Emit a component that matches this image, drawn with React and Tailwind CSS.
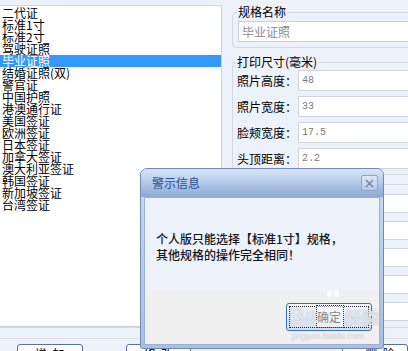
import React from "react";

const items = [
  "二代证",
  "标准1寸",
  "标准2寸",
  "驾驶证照",
  "毕业证照",
  "结婚证照(双)",
  "警官证",
  "中国护照",
  "港澳通行证",
  "美国签证",
  "欧洲签证",
  "日本签证",
  "加拿大签证",
  "澳大利亚签证",
  "韩国签证",
  "新加坡签证",
  "台湾签证",
];

const rows = [
  ["照片高度：", "48"],
  ["照片宽度：", "33"],
  ["脸颊宽度：", "17.5"],
  ["头顶距离：", "2.2"],
];

function Field({ label, value }) {
  return (
    <div className="flex items-center h-[21px]">
      <div className="w-[65px] pl-[4px] text-[12px] leading-[14px] text-black">{label}</div>
      <div className="w-[160px] h-[21px] border border-[#D0D5DD] bg-white pl-[3px] flex items-center text-[10px] font-['Liberation_Mono',monospace] text-[#7A7A7A]">
        {value}
      </div>
    </div>
  );
}

export default function App() {
  return (
    <div className="relative w-[408px] h-[351px] overflow-hidden bg-[#EDF1F9] font-['Noto_Sans_CJK_SC','Liberation_Sans',sans-serif] text-black">
      <div className="flex h-[327px] overflow-hidden">
        {/* list panel */}
        <div className="mt-[5px] w-[222px] h-[322px] shrink-0 bg-white border-t border-r border-b border-[#CDD3DD] pt-[1px]">
          {items.map((it, i) => (
            <div
              key={it}
              className={
                i === 4
                  ? "h-[12px] leading-[12px] text-[12px] pl-[2px] bg-[#3399FF] text-white whitespace-nowrap"
                  : "h-[12px] leading-[12px] text-[12px] pl-[2px] text-black whitespace-nowrap"
              }
            >
              {it}
            </div>
          ))}
        </div>
        {/* right panel */}
        <div className="pl-[10px] pt-[5px] flex flex-col shrink-0">
          <fieldset className="w-[200px] border border-[#D3D8E1] rounded-[4px] px-0 pb-[5px]">
            <legend className="ml-[4px] px-[1px] text-[12px] leading-[14px]">规格名称</legend>
            <div className="ml-[5px] mt-[2px] h-[21px] border border-[#C9CED7] bg-white pl-[3px] flex items-center text-[12px] text-[#8C8C8C]">
              毕业证照
            </div>
          </fieldset>
          <fieldset className="mt-[7px] w-[200px] border border-[#D3D8E1] rounded-[4px] px-0 pb-[5px]">
            <legend className="ml-[3px] px-[1px] text-[12px] leading-[14px]">打印尺寸(毫米)</legend>
            <div className="mt-[1px] flex flex-col gap-[5px]">
              {rows.map(([l, v]) => (
                <Field key={l} label={l} value={v} />
              ))}
            </div>
          </fieldset>
          <fieldset className="mt-[2px] w-[200px] border border-[#D3D8E1] rounded-[4px] px-0 pb-[5px]">
            <legend className="ml-[3px] px-[1px] text-[12px] leading-[14px]">&nbsp;</legend>
            <div className="mt-[3px] flex flex-col gap-[8px]">
              {[0, 1, 2, 3, 4, 5].map((k) => (
                <div key={k} className="ml-[70px] h-[19px] border border-[#D0D5DD] bg-white" />
              ))}
            </div>
          </fieldset>
        </div>
      </div>

      {/* bottom strip */}
      <div className="h-[24px] border-t border-[#D3D8E0]">
        <div className="mt-[10px] border-t border-[#DDE2EA] pt-[5px] flex">
          <div className="ml-[17px] w-[68px] h-[22px] border border-[#5572A3] rounded-[3px] bg-linear-to-b from-white to-[#E6ECF5] text-center text-[12px] leading-[18px]">
            增&nbsp;&nbsp;加
          </div>
          <div className="ml-[43px] w-[68px] h-[22px] border border-[#5572A3] rounded-[3px] bg-linear-to-b from-white to-[#E6ECF5] text-center text-[12px] leading-[18px]">
            修&nbsp;&nbsp;改
          </div>
          <div className="ml-[151px] w-[68px] h-[22px] border border-[#5572A3] rounded-[3px] bg-white text-center text-[12px] leading-[18px] pl-[10px]">
            删&nbsp;&nbsp;除
          </div>
        </div>
      </div>

      {/* dialog */}
      <div className="absolute left-[140px] top-[168px] w-[244px] h-[181px] rounded-t-[7px] rounded-b-[3px] border border-[#7189B3] bg-linear-to-b from-[#C9DBF3] to-[#A9BFE3] flex flex-col">
        <div className="h-[28px] shrink-0 flex items-center justify-between pl-[11px] pr-[5px] rounded-t-[6px] bg-linear-to-b from-[#D6E6F8] via-[#B3C9EA] to-[#8EA8D4]">
          <span className="text-[12px] leading-[14px] text-[#24508E]">警示信息</span>
          <div className="w-[17px] h-[16px] border border-[#8EA4C9] rounded-[2px] bg-linear-to-b from-[#DDE8F7] to-[#B4C8E6] flex items-center justify-center">
            <svg width="9" height="9" viewBox="0 0 9 9">
              <path d="M1 1 L8 8 M8 1 L1 8" stroke="#6F7F98" strokeWidth="1.2" />
            </svg>
          </div>
        </div>
        <div className="flex-1 mx-[3px] mb-[3px] border border-[#9DB1D4] flex flex-col">
          <div className="h-[93px] shrink-0 bg-[#EEF2FA] pl-[11px] pt-[33px] text-[12px] leading-[16px] font-medium text-[#14161E]">
            <div className="whitespace-nowrap">个人版只能选择【标准1寸】规格，</div>
            <div className="whitespace-nowrap">其他规格的操作完全相同！</div>
          </div>
          <div className="flex-1 bg-[#F0F0F0] flex justify-end items-start pt-[12px] pr-[7px]">
            <div className="relative w-[86px] h-[28px] border border-[#3E6DB5] rounded-[3px] bg-linear-to-b from-[#F4F7FD] to-[#D2DFF2] flex items-center justify-center text-[12px] text-black">
              <div className="absolute inset-[2px] border border-dotted border-[#222]" />
              确定
            </div>
          </div>
        </div>
      </div>

      {/* watermark */}
      <div className="absolute left-[316px] top-[305px] w-[28px] h-[23px] border border-dotted border-[#333] bg-white/50" />
      <div className="absolute left-[289px] top-[302px] text-[22px] font-bold leading-[28px] font-['Liberation_Sans',sans-serif] text-white/70 [text-shadow:0_0_1px_#9AA6B8]">
        Ba
      </div>
      <div className="absolute left-[327px] top-[290px] flex gap-[2px]">
        <div className="w-[5px] h-[7px] rounded-full bg-white/70" />
        <div className="w-[5px] h-[7px] rounded-full bg-white/70" />
      </div>
      <div className="absolute left-[345px] top-[307px] text-[17px] font-bold leading-[20px] text-white/70 [text-shadow:0_0_1px_#9AA6B8]">
        经验
      </div>
      <div className="absolute left-[292px] top-[331px] text-[9px] leading-[10px] font-['Liberation_Sans',sans-serif] text-white/70 [text-shadow:0_0_1px_#A0A8B8]">
        jingyan.baidu.com
      </div>
    </div>
  );
}
